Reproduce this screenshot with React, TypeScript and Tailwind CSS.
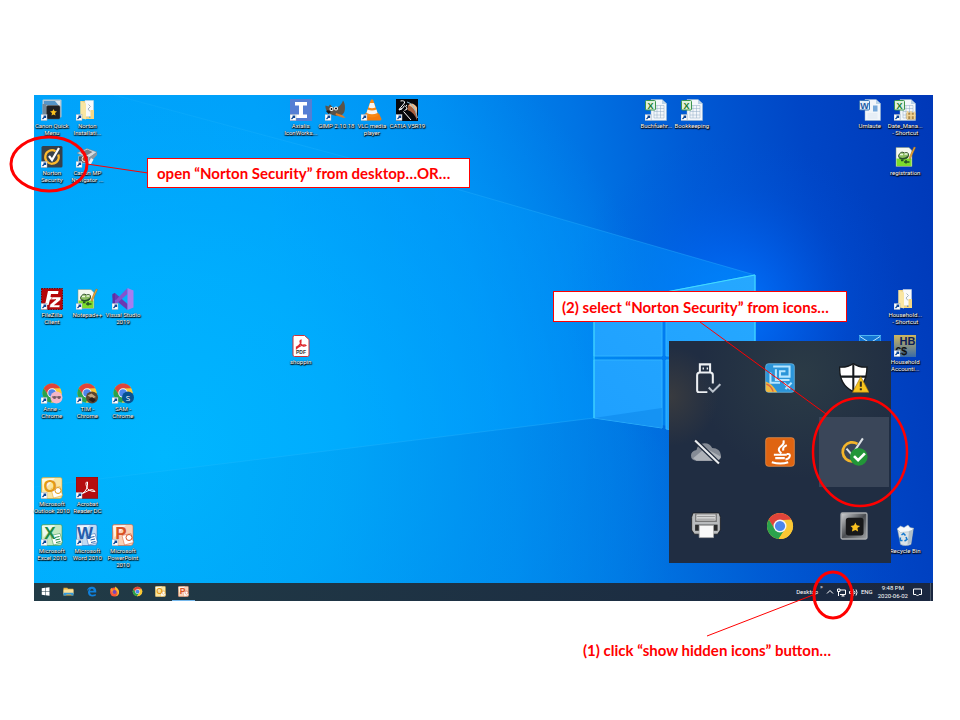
import type { ReactNode } from 'react';
import clsx from 'clsx';

interface DesktopItem {
  label: string[];
  name?: string;
  cell: string;
  icon: ReactNode;
  shortcut?: boolean;
}

/** Small white square with the blue arrow, lower left of a shortcut. */
function ShortcutArrow() {
  return (
    <g>
      <rect x="0" y="31" width="12" height="12" fill="#fff" stroke="#9ab" strokeWidth="1" />
      <path d="m3 40 5-5M5 34h4v4" fill="none" stroke="#0a4596" strokeWidth="2.500" />
    </g>
  );
}

function ChromeMark() {
  return (
    <g>
      <circle cx="22" cy="22" r="19" fill="#fbc834" />
      <path d="M5.5 12.5A19 19 0 0 1 38.500 12.500L22 13.500 14 26.500z" fill="#e0443a" />
      <path d="M5.500 12.500A19 19 0 0 0 20 41L29.500 26.500 14 26z" fill="#2ba24c" />
      <path d="M22 13.500h17A19 19 0 0 1 20 41l9.500-14.500z" fill="#fbc834" />
      <circle cx="22" cy="22" r="9.500" fill="#f4f6f8" />
      <circle cx="22" cy="22" r="7.500" fill="#4d86ec" />
    </g>
  );
}

function StarBox() {
  return (
    <g>
      <rect x="3" y="3" width="38" height="38" rx="2" fill="url(#metal)" stroke="#a9acaf" strokeWidth="2" />
      <rect x="10" y="10" width="26" height="26" rx="4" fill="#17181a" />
      <path d="m24 17 2 4 5 1-4 3 1 5-4-2-5 2 1-5-3-3 5-1z" fill="#f9c120" />
    </g>
  );
}

function QuickMenuIcon() {
  return (
    <g>
      <rect x="3" y="1" width="38" height="36" rx="2" fill="#b7c9d6" />
      <path d="M6 4h32v8H6z" fill="#5595c8" />
      <path d="M28 4h10v12z" fill="#dfe9ef" />
      <rect x="3" y="10" width="8" height="27" fill="#73899a" />
      <rect x="11" y="13" width="27" height="27" rx="3" fill="#202123" stroke="#51565b" />
      <path d="m25 20 2 4 5 1-4 3 1 5-4-2-4 2 1-5-4-3 5-1z" fill="#f9c120" />
    </g>
  );
}

function FolderIcon() {
  return (
    <g>
      <path d="M9 4h17v35H9z" fill="#eed17b" />
      <path d="M18 3h17v32H18z" fill="#f9fafb" stroke="#d0d7dc" />
      <path d="m25 11 4 4-5 5 4 5" fill="none" stroke="#a6b4c0" strokeWidth="2" />
      <path d="M9 4l11 5v32L9 38z" fill="#fae6a2" />
      <path d="M29 22h7v18H20v-3h9z" fill="#f4d783" />
    </g>
  );
}

function NortonIcon() {
  return (
    <g>
      <rect x="1" y="0" width="42" height="43" rx="3" fill="#37404a" />
      <path d="M29 10.500A13.500 13.500 0 1 0 34.500 17" fill="none" stroke="#fbb92c" strokeWidth="4.500" />
      <path d="m16 20 6 8L36 4" fill="none" stroke="#fff" strokeWidth="4.500" />
    </g>
  );
}

function NavigatorIcon() {
  return (
    <g>
      <path d="m2 14 20-9 20 7-17 13z" fill="#d6dade" stroke="#707880" />
      <path d="m8 13 15-6 10 5-14 8z" fill="#777f87" />
      <path d="m24 24 18-11v5L28 33z" fill="#8d969f" />
      <rect x="5" y="20" width="20" height="14" rx="2" fill="#4f5860" stroke="#e3e7ea" />
      <circle cx="17" cy="26" r="5" fill="#a7532e" stroke="#f1f1f1" strokeWidth="2" />
      <path d="m24 35 6-11 5 3-6 11z" fill="#eee" />
    </g>
  );
}

function IconWorksIcon() {
  return (
    <g>
      <rect x="0" y="0" width="44" height="44" fill="#557ed4" />
      <path d="M10 6h24v7h-8v18h8v7H10v-7h8V13h-8z" fill="#fff" />
    </g>
  );
}

function GimpIcon() {
  return (
    <g>
      <path d="M1 13 7 15 10 11 16 17c8 1 16-2 20-14 5 6 6 23-1 28-7 4-18 3-24-1C4 26 0 20 1 13z" fill="#5b5348" />
      <circle cx="13" cy="20" r="4" fill="#fff" />
      <circle cx="22" cy="19" r="4" fill="#fff" />
      <circle cx="13" cy="20" r="2" />
      <circle cx="22" cy="19" r="2" />
      <path d="m22 28 14 5 5 5-7-1-13-5z" fill="#dd7b27" />
      <path d="M2 24q5-4 10 2l-5 4z" fill="#201d1b" />
    </g>
  );
}

function VlcIcon() {
  return (
    <g>
      <path d="M8 29h28l5 11q0 3-3 3H7q-4 0-3-3z" fill="#f47b0b" />
      <path d="M20 1h4l11 32q-13 8-26 0z" fill="#f88712" />
      <path d="m18 8 8 0 3 9q-7 3-14 0zM13 21q9 4 18 0l2 7q-11 5-22 0z" fill="#f5f4f2" />
    </g>
  );
}

function CatiaIcon() {
  return (
    <g>
      <rect x="0" y="0" width="44" height="44" fill="#06070b" />
      <path d="M24 12q9-4 18 4v27q-5-16-19-21z" fill="#a8603c" />
      <path d="M28 9q10-1 14 9v12Q36 17 26 13z" fill="#f0bb8a" />
      <path d="M22 6Q36 8 43 38" fill="none" stroke="#86bbd6" strokeWidth="2" />
      <path d="M9 4q9-2 8 4L6 21q9-1 11-8M22 12q-5 2-1 5t-4 6M12 20l-6 2M15 25l15 17" fill="none" stroke="#fff" strokeWidth="2" />
    </g>
  );
}

function SheetIcon({ doc = false, tools = false }: { doc?: boolean; tools?: boolean }) {
  return (
    <g>
      <path d="M12 1h22l9 8v34H12z" fill="#f2f6fa" stroke="#9bb7cf" />
      <path d="M34 1v9h9z" fill="#b9d2e6" />
      {doc ? (
        <g>
          <path d="M28 13h9v12h-9z" fill="#75a8da" />
          <path d="M17 30h20M17 34h20M17 38h20" stroke="#dbe6f1" strokeWidth="2" />
        </g>
      ) : (
        <path d="M18 13h20v25H18zM18 19h20M18 25h20M18 32h20M24 13v25M31 13v25" fill="none" stroke="#91adc7" />
      )}
      <rect x="1" y="3" width="20" height="19" rx="2" fill={doc ? '#e5effa' : '#dff0dc'} stroke={doc ? '#3b74b6' : '#3c964d'} strokeWidth="2" />
      <text x="11" y="19" textAnchor="middle" fontSize="18" fontWeight="700" fill={doc ? '#1d5ba6' : '#1b7a2b'} fontFamily="Liberation Sans, sans-serif">
        {doc ? 'W' : 'X'}
      </text>
      {tools && (
        <g>
          <rect x="25" y="27" width="18" height="14" rx="2" fill="#ad8848" />
          <path d="M27 24v16M34 24v16M41 25v15M25 33h18" stroke="#f0d396" strokeWidth="3" />
        </g>
      )}
    </g>
  );
}

function NotepadIcon() {
  return (
    <g>
      <path d="M4 3h26l6 6v32H4z" fill="#f5f8ef" stroke="#839070" />
      <path d="M5 25h30v15H5z" fill="#7ddc2c" />
      <path d="M9 19q5-10 12-5 8-3 8 4 0 8-11 8-8 1-9-7z" fill="#8cbd62" stroke="#33502c" strokeWidth="2" />
      <path d="M12 17h6M21 16h6" stroke="#e9f6de" strokeWidth="3" />
      <path d="M11 24q9 4 17-3M20 32h11M24 28v7M14 29h5" stroke="#24502a" strokeWidth="3" fill="none" />
      <path d="m30 24 10-22 3 1-11 24z" fill="#efa936" stroke="#a66b19" />
    </g>
  );
}

function FileZillaIcon() {
  return (
    <g>
      <rect x="1" y="1" width="42" height="42" fill="#b50609" stroke="#7e0204" strokeWidth="2" strokeDasharray="3 2" />
      <path d="M8 34 14 6h21l-1 6H20l-1 6h9l-1 5h-9l-3 11z" fill="#fff" />
      <path d="M22 18h18l-1 6-12 10h11l-1 5H17l1-6 12-10h-9z" fill="#fff" stroke="#b50609" />
    </g>
  );
}

function VisualStudioIcon() {
  return (
    <g>
      <path d="m1 13 5-3 25 22v12L1 19z" fill="#6a38b2" />
      <path d="M1 31 31 0v12L6 34z" fill="#8452cf" />
      <path d="m1 12 5-2v24l-5-3z" fill="#5f30a3" />
      <path d="m31 0 12 5v34l-12 5z" fill="#a67df0" />
    </g>
  );
}

function PdfIcon() {
  return (
    <g>
      <path d="M9 1h20l9 8v31q0 3-3 3H9q-3 0-3-3V4q0-3 3-3z" fill="#fff" stroke="#cf3339" strokeWidth="2" />
      <path d="M13 24q10-4 9-14-4 1 0 8t10 3q-2-3-9 0t-10 6z" fill="none" stroke="#e0282e" strokeWidth="2.500" />
      <text x="22" y="38" textAnchor="middle" fontSize="10" fontWeight="700" fill="#333" fontFamily="Liberation Sans, sans-serif">PDF</text>
    </g>
  );
}

function EnvelopeIcon() {
  return (
    <g>
      <rect x="0" y="1" width="44" height="30" fill="#1476d4" stroke="#4db5f3" strokeWidth="2" />
      <path d="m2 3 20 13L42 3M2 30l15-14M42 30 27 16" fill="none" stroke="#bce7ff" strokeWidth="2" />
    </g>
  );
}

function HouseholdIcon() {
  return (
    <g>
      <rect x="0" y="0" width="44" height="44" fill="url(#household)" />
      <text x="27" y="19" textAnchor="middle" fontSize="22" fontWeight="700" fill="#0b2058" fontFamily="Liberation Sans, sans-serif">HB</text>
      <text x="14" y="40" textAnchor="middle" fontSize="22" fontWeight="700" fill="#111" fontFamily="Liberation Sans, sans-serif">€$</text>
    </g>
  );
}

function ProfileChromeIcon({ profile }: { profile: 'anne' | 'tim' | 'sam' }) {
  return (
    <g>
      <ChromeMark />
      {profile === 'anne' && (
        <g>
          <circle cx="31" cy="31" r="12" fill="#f5b6c8" />
          <path d="M22 30h18" stroke="#555" strokeWidth="2" />
          <circle cx="27" cy="31" r="3" fill="#775763" />
          <circle cx="36" cy="31" r="3" fill="#775763" />
        </g>
      )}
      {profile === 'tim' && (
        <g>
          <circle cx="32" cy="31" r="12" fill="#5c442e" />
          <path d="m23 27 8-4 9 7-7 3z" fill="#c2a37b" />
          <path d="m25 35 7-5 8 6-6 5z" fill="#281d1a" />
        </g>
      )}
      {profile === 'sam' && (
        <g>
          <circle cx="32" cy="31" r="12" fill="#075291" />
          <text x="32" y="37" textAnchor="middle" fontSize="16" fill="#fff" fontFamily="Open Sans, sans-serif">S</text>
        </g>
      )}
    </g>
  );
}

/** Office 2010 tile: glossy sheet, big letter and a small document on it. */
function OfficeIcon({ letter, color, pale }: { letter: string; color: string; pale: string }) {
  return (
    <g>
      <path d="M4 1h34q5 0 4 5v32q0 5-5 5H4q-3 0-3-4V5q0-4 3-4z" fill={pale} stroke={color} strokeWidth="1" />
      <path d="M2 4 28 2 5 27z" fill="#fff" opacity="0.700" />
      <path d="m20 23 18-4 5 18-18 5z" fill="#fff" stroke={color} />
      {letter === 'O' || letter === 'P' ? (
        <circle cx="34" cy="27" r="6" fill="#fff" stroke={color} strokeWidth="2" />
      ) : (
        <path d="m28 27 9-2M29 32l9-2M30 37l9-2" stroke={color} strokeWidth="2" />
      )}
      <text x="18" y="30" textAnchor="middle" fontSize="34" fontWeight="700" fill={color} fontFamily="Liberation Sans, sans-serif">
        {letter}
      </text>
    </g>
  );
}

function AcrobatIcon() {
  return (
    <g>
      <rect x="0" y="0" width="44" height="43" fill="#b50d0f" stroke="#7d0809" />
      <path d="M11 34q14-8 12-24-5-1-2 9t17 10q-4-7-15-1T11 34z" fill="none" stroke="#fff" strokeWidth="2" />
    </g>
  );
}

function RecycleIcon() {
  return (
    <g>
      <path d="m7 11 32-3-5 33q-12 5-21 0z" fill="#dae2e7" stroke="#8799a5" />
      <path d="m6 10 7-6 7 3 8-5 4 5 7 2-5 6-21 2z" fill="#f6f9fb" stroke="#9fb0ba" />
      <path d="m30 14-3 27 7-3 4-27z" fill="#b0bfc9" />
      <path d="m15 22 4-3 4 4M13 27l-1 6h5M24 26l2 5-5 3" fill="none" stroke="#1277ce" strokeWidth="3" />
    </g>
  );
}

const DESKTOP_ITEMS: DesktopItem[] = [
  { label: ['Canon Quick', 'Menu'], cell: 'col-start-1 row-start-1', icon: <QuickMenuIcon />, shortcut: true },
  { label: ['Norton', 'Installati...'], cell: 'col-start-2 row-start-1', icon: <FolderIcon />, shortcut: true },
  { label: ['Axialis', 'IconWorks...'], cell: 'col-start-8 row-start-1', icon: <IconWorksIcon />, shortcut: true },
  { label: ['GIMP 2.10.18'], cell: 'col-start-9 row-start-1', icon: <GimpIcon />, shortcut: true },
  { label: ['VLC media', 'player'], cell: 'col-start-10 row-start-1', icon: <VlcIcon />, shortcut: true },
  { label: ['CATIA V5R19'], cell: 'col-start-11 row-start-1', icon: <CatiaIcon />, shortcut: true },
  { label: ['Buchfuehr...'], cell: 'col-start-18 row-start-1', icon: <SheetIcon />, shortcut: true },
  { label: ['Bookkeeping'], cell: 'col-start-19 row-start-1', icon: <SheetIcon />, shortcut: true },
  { label: ['Umlaute'], cell: 'col-start-24 row-start-1', icon: <SheetIcon doc /> },
  { label: ['Date_Mana...', '- Shortcut'], cell: 'col-start-25 row-start-1', icon: <SheetIcon tools />, shortcut: true },
  { label: ['Norton', 'Security'], cell: 'col-start-1 row-start-2', icon: <NortonIcon />, shortcut: true },
  { label: ['Canon MP', 'Navigator ...'], cell: 'col-start-2 row-start-2', icon: <NavigatorIcon />, shortcut: true },
  { label: ['registration'], cell: 'col-start-25 row-start-2', icon: <NotepadIcon /> },
  { label: ['FileZilla', 'Client'], cell: 'col-start-1 row-start-5', icon: <FileZillaIcon />, shortcut: true },
  { label: ['Notepad++'], cell: 'col-start-2 row-start-5', icon: <NotepadIcon />, shortcut: true },
  { label: ['Visual Studio', '2019'], cell: 'col-start-3 row-start-5', icon: <VisualStudioIcon />, shortcut: true },
  { label: ['Household...', '- Shortcut'], cell: 'col-start-25 row-start-5', icon: <FolderIcon />, shortcut: true },
  { label: ['shoppin'], cell: 'col-start-8 row-start-6', icon: <PdfIcon /> },
  { label: [], name: 'Mail', cell: 'col-start-24 row-start-6', icon: <EnvelopeIcon /> },
  { label: ['Household', 'Accounti...'], cell: 'col-start-25 row-start-6', icon: <HouseholdIcon />, shortcut: true },
  { label: ['Anne -', 'Chrome'], cell: 'col-start-1 row-start-7', icon: <ProfileChromeIcon profile="anne" />, shortcut: true },
  { label: ['TIM -', 'Chrome'], cell: 'col-start-2 row-start-7', icon: <ProfileChromeIcon profile="tim" />, shortcut: true },
  { label: ['SAM -', 'Chrome'], cell: 'col-start-3 row-start-7', icon: <ProfileChromeIcon profile="sam" />, shortcut: true },
  { label: ['Microsoft', 'Outlook 2010'], cell: 'col-start-1 row-start-9', icon: <OfficeIcon letter="O" color="#e39a15" pale="#fbe5a0" />, shortcut: true },
  { label: ['Acrobat', 'Reader DC'], cell: 'col-start-2 row-start-9', icon: <AcrobatIcon />, shortcut: true },
  { label: ['Microsoft', 'Excel 2010'], cell: 'col-start-1 row-start-10', icon: <OfficeIcon letter="X" color="#228b43" pale="#c6e8c1" />, shortcut: true },
  { label: ['Microsoft', 'Word 2010'], cell: 'col-start-2 row-start-10', icon: <OfficeIcon letter="W" color="#245cab" pale="#c1daf3" />, shortcut: true },
  { label: ['Microsoft', 'PowerPoint', '2010'], cell: 'col-start-3 row-start-10', icon: <OfficeIcon letter="P" color="#d85124" pale="#fad0b5" />, shortcut: true },
  { label: ['Recycle Bin'], cell: 'col-start-25 row-start-10', icon: <RecycleIcon /> },
];

const TRAY_ITEMS: { name: string; active?: boolean; icon: ReactNode }[] = [
  {
    name: 'Safely Remove Hardware',
    icon: (
      <g fill="none" stroke="#edf0f3" strokeWidth="3">
        <path d="M13 14V2h15v12M24 43H12q-3 0-3-3V18q0-4 4-4h15q4 0 4 4v12" />
        <path d="m26 36 6 6 11-11" stroke="#b9c2cc" />
        <path d="M17 8h2M23 8h2" />
      </g>
    ),
  },
  {
    name: 'Graphics Settings',
    icon: (
      <g>
        <rect x="1" y="1" width="42" height="42" rx="4" fill="#2b95d9" stroke="#79bfe8" />
        <path d="M1 27q10 3 17 16H5q-4 0-4-4z" fill="#efb942" />
        <path d="M2 31q7 2 10 11" fill="none" stroke="#da6547" strokeWidth="2" />
        <path d="M12 5h24v15H22v-8h8M16 9v16h20M8 14v15h14M28 29l9 9M39 29l-9 9" fill="none" stroke="#b7e6ff" strokeWidth="3" />
      </g>
    ),
  },
  {
    name: 'Windows Security',
    icon: (
      <g>
        <path d="M21 1q9 6 20 5 0 27-20 36Q0 32 1 6q11 1 20-5z" fill="#fff" stroke="#15191d" strokeWidth="2" />
        <path d="M21 2v39M2 20h38" stroke="#15191d" strokeWidth="3" />
        <path d="m32 20 12 23H20z" fill="#f7c51e" stroke="#a97b0c" />
        <path d="M32 27v8M32 37v3" stroke="#322b19" strokeWidth="3" />
      </g>
    ),
  },
  {
    name: 'OneDrive',
    icon: (
      <g>
        <path d="M8 35q-8-1-8-8 0-6 8-8 2-10 12-10 8 0 11 7 12 0 13 11 0 8-9 8z" fill="#858b95" />
        <path d="m3 31 18-15 23 13q-2 6-9 6H8z" fill="#aeb2b8" />
        <path d="m6 5 35 34" stroke="#202b3d" strokeWidth="7" />
        <path d="m6 5 35 34" stroke="#eceef0" strokeWidth="3" />
      </g>
    ),
  },
  {
    name: 'Java Update',
    icon: (
      <g>
        <rect x="1" y="1" width="42" height="42" rx="4" fill="#df6411" stroke="#f19b52" />
        <path d="M27 5q2 5-4 9-6 5 1 10M32 12q-7 3-5 8M13 26h19M15 31h14M10 37q13 4 24 0M32 25q6-1 4 4-1 3-6 4" fill="none" stroke="#fff" strokeWidth="3" />
      </g>
    ),
  },
  {
    name: 'Norton Security',
    active: true,
    icon: (
      <g>
        <path d="M27 10A14 14 0 1 0 29 32" fill="none" stroke="#f4b52b" strokeWidth="4" />
        <path d="m11 17 8 9L35 2" fill="none" stroke="#dce1e6" strokeWidth="3" />
        <circle cx="29" cy="29" r="13" fill="#229638" />
        <path d="m22 28 6 6 10-10" fill="none" stroke="#fff" strokeWidth="4" />
      </g>
    ),
  },
  {
    name: 'Printer',
    icon: (
      <g>
        <path d="M3 3h38l2 6v19l-4 6H5l-4-6V9z" fill="#b9bbbd" stroke="#111" />
        <path d="M7 4h30v11H7z" fill="#e8e8e8" stroke="#777" strokeWidth="2" />
        <path d="M9 8h26M9 12h26" stroke="#999" strokeWidth="2" />
        <path d="M6 20h33v9H6z" fill="#292a2b" />
        <path d="M12 21h21v18H12z" fill="#f8f8f8" stroke="#aaa" />
      </g>
    ),
  },
  { name: 'Google Chrome', icon: <ChromeMark /> },
  { name: 'Canon Quick Menu', icon: <StarBox /> },
];

const TASKBAR_ITEMS: { name: string; open?: boolean; icon: ReactNode }[] = [
  {
    name: 'Start',
    icon: <path d="M7 9l13-2v14H7zM22 7l16-2v16H22zM7 23h13v14L7 35zM22 23h16v16l-16-2z" fill="#fff" />,
  },
  {
    name: 'File Explorer',
    icon: (
      <g>
        <path d="M2 7h15l3 4h21v27H2z" fill="#eab340" />
        <path d="M2 14h40v18H2z" fill="#fbe09a" />
        <path d="M2 27h40v11h-9v-4H13v4H2z" fill="#3599d9" />
      </g>
    ),
  },
  {
    name: 'Microsoft Edge',
    icon: (
      <path
        d="M4 22C5 8 14 3 24 3c14 0 18 11 17 23H16c1 11 14 11 23 6v7c-15 7-31 2-31-13 0-6 3-10 7-13-7 1-10 5-11 9zm12-3h15q-1-8-8-8-6 1-7 8z"
        fill="#0f80dc"
        fillRule="evenodd"
      />
    ),
  },
  {
    name: 'Firefox',
    icon: (
      <g>
        <circle cx="22" cy="24" r="18" fill="#fb5439" />
        <path d="M24 2q16 10 16 23 0 13-14 17 12-9 7-19-2-5-8-8z" fill="#fcc32a" />
        <path d="M5 15 9 7l6 7q13-2 15 8 1 12-10 11-7-1-9-8z" fill="#ff9130" />
        <circle cx="22" cy="24" r="8" fill="#7745ba" />
      </g>
    ),
  },
  { name: 'Google Chrome', icon: <ChromeMark /> },
  { name: 'Outlook', icon: <OfficeIcon letter="O" color="#e39a15" pale="#fbe5a0" /> },
  { name: 'PowerPoint', open: true, icon: <OfficeIcon letter="P" color="#d85124" pale="#fad0b5" /> },
];

function Wallpaper() {
  return (
    <svg
      aria-hidden="true"
      viewBox="0 0 899 506"
      preserveAspectRatio="none"
      className="absolute inset-0 h-full w-full"
    >
      <defs>
        <linearGradient id="sky" x1="0" y1="0.100" x2="1" y2="0">
          <stop offset="0" stopColor="#00a2f8" />
          <stop offset="0.250" stopColor="#009ef7" />
          <stop offset="0.450" stopColor="#008cf0" />
          <stop offset="0.600" stopColor="#0074e4" />
          <stop offset="0.720" stopColor="#005bd5" />
          <stop offset="0.850" stopColor="#0046c6" />
          <stop offset="1" stopColor="#0038b8" />
        </linearGradient>
        <radialGradient id="haze" cx="130" cy="360" r="520" gradientUnits="userSpaceOnUse">
          <stop offset="0" stopColor="#00b8ff" />
          <stop offset="0.350" stopColor="#00b2ff" stopOpacity="0.800" />
          <stop offset="0.700" stopColor="#00a6ff" stopOpacity="0.400" />
          <stop offset="1" stopColor="#00a0ff" stopOpacity="0" />
        </radialGradient>
        <radialGradient id="glow" cx="700" cy="210" r="170" gradientUnits="userSpaceOnUse">
          <stop offset="0" stopColor="#0078ff" stopOpacity="0.900" />
          <stop offset="0.350" stopColor="#0068fa" stopOpacity="0.500" />
          <stop offset="0.700" stopColor="#0058e8" stopOpacity="0.150" />
          <stop offset="1" stopColor="#0050e0" stopOpacity="0" />
        </radialGradient>
        <linearGradient id="beam" x1="0" y1="0" x2="1" y2="0">
          <stop offset="0" stopColor="#00b0ff" stopOpacity="0" />
          <stop offset="1" stopColor="#0094ff" stopOpacity="0.500" />
        </linearGradient>
        <linearGradient id="edge" x1="0" y1="0" x2="1" y2="0">
          <stop offset="0" stopColor="#3cc4ff" stopOpacity="0.100" />
          <stop offset="1" stopColor="#2ab4ff" stopOpacity="0.400" />
        </linearGradient>
        <linearGradient id="floor" x1="0" y1="0" x2="1" y2="0">
          <stop offset="0" stopColor="#0080e0" stopOpacity="0" />
          <stop offset="0.650" stopColor="#0074dc" stopOpacity="0.350" />
          <stop offset="1" stopColor="#0040c0" stopOpacity="0.100" />
        </linearGradient>
        <linearGradient id="pane" x1="0" y1="1" x2="1" y2="0">
          <stop offset="0" stopColor="#1ea0ff" />
          <stop offset="1" stopColor="#26a8ff" />
        </linearGradient>
        <linearGradient id="household" x1="0" y1="0" x2="0" y2="1">
          <stop offset="0" stopColor="#cfb65e" />
          <stop offset="1" stopColor="#3a6ba6" />
        </linearGradient>
        <linearGradient id="metal" x1="0" y1="0" x2="1" y2="1">
          <stop offset="0" stopColor="#d2d4d6" />
          <stop offset="0.500" stopColor="#4b4e52" />
          <stop offset="1" stopColor="#9fa2a5" />
        </linearGradient>
      </defs>
      <rect width="899" height="506" fill="url(#sky)" />
      <rect width="899" height="506" fill="url(#haze)" />
      <rect width="899" height="506" fill="url(#glow)" />
      <path d="M80 0 315 63 721 180 721 340 560 323 0 392V0z" fill="url(#beam)" />
      <path d="M0 392 560 323 721 345 850 372 899 506H0z" fill="url(#floor)" />
      <path d="M80 0 315 63 721 180" fill="none" stroke="url(#edge)" />
      <path d="M0 392 560 323" fill="none" stroke="url(#edge)" />
      <path
        d="M560 211 628 198v63h-68zM632 197l89-17v81h-89zM560 265h68v68l-68-10zM632 265h89v82l-89-13z"
        fill="url(#pane)"
        stroke="#30b4ff"
      />
      <path d="m560 323 68-10v20z" fill="#0a84e8" opacity="0.500" />
      <path d="M560 211v112M632 197l89-17v81" fill="none" stroke="#42dcff" />
    </svg>
  );
}

function DesktopIcon({ item }: { item: DesktopItem }) {
  return (
    <button
      type="button"
      aria-label={item.name ?? item.label.join(' ')}
      className={clsx('flex flex-col items-center gap-px', item.cell)}
    >
      <svg viewBox="0 0 44 44" className="size-[22px] shrink-0">
        {item.icon}
        {item.shortcut && <ShortcutArrow />}
      </svg>
      <span className="flex flex-col items-center text-[6px] leading-[7px] whitespace-nowrap text-white [text-shadow:0_0_1px_#000,0_1px_1px_#000,1px_1px_1px_#000]">
        {item.label.map((line) => (
          <span key={line}>{line}</span>
        ))}
      </span>
    </button>
  );
}

function HiddenIconsPanel() {
  return (
    <div className="absolute right-[42px] bottom-[38px] grid size-[222px] grid-cols-3 grid-rows-3 bg-[#202d42] bg-[radial-gradient(circle_at_60%_15%,#2b3b46_0%,transparent_45%),radial-gradient(circle_at_0%_25%,#393b3f_0%,transparent_18%)]">
      {TRAY_ITEMS.map((item) => (
        <button
          key={item.name}
          type="button"
          aria-label={item.name}
          className={clsx('m-[2px] flex items-center justify-center', item.active && 'bg-[#3a4659]')}
        >
          <svg viewBox="0 0 44 44" className="size-[30px]">
            {item.icon}
          </svg>
        </button>
      ))}
    </div>
  );
}

function Taskbar() {
  return (
    <footer className="relative flex h-[18px] shrink-0 items-center justify-between bg-linear-to-r from-[#213b46] to-[#1a2740] text-[6px] leading-[8px] text-white">
      <div className="flex h-full">
        {TASKBAR_ITEMS.map((item) => (
          <button
            key={item.name}
            type="button"
            aria-label={item.name}
            className={clsx(
              'flex w-[23px] items-center justify-center border-b',
              item.open ? 'border-[#76b9ed]' : 'border-transparent'
            )}
          >
            <svg viewBox="0 0 44 44" className="size-[11px]">
              {item.icon}
            </svg>
          </button>
        ))}
      </div>
      <div className="mr-[2px] flex h-full items-center gap-[3px] border-r border-[#4c5968] pr-[8px]">
        <span className="flex h-full gap-[2px]">
          <span className="self-center">Desktop</span>
          <span>»</span>
        </span>
        <button type="button" aria-label="Show hidden icons">
          <svg viewBox="0 0 16 16" className="size-[8px]" fill="none" stroke="#fff" strokeWidth="2">
            <path d="m2 11 6-6 6 6" />
          </svg>
        </button>
        <svg viewBox="0 0 18 18" className="size-[9px]" fill="none" stroke="#fff" strokeWidth="2">
          <path d="M6 4h11v9H6M9 16h6M12 13v3M1 2h5v5H1zM3 7v9" />
        </svg>
        <svg viewBox="0 0 18 18" className="size-[9px]" fill="none" stroke="#fff" strokeWidth="2">
          <path d="M1 7h3l4-4v12l-4-4H1zM11 6q2 3 0 6M14 3q4 6 0 12" />
        </svg>
        <span>ENG</span>
        <span className="mx-[2px] flex flex-col items-center">
          <time>9:48 PM</time>
          <time>2020-06-02</time>
        </span>
        <button type="button" aria-label="Notifications">
          <svg viewBox="0 0 18 18" className="size-[9px]" fill="none" stroke="#fff" strokeWidth="2">
            <path d="M1 2h16v11h-5l-3 3-3-3H1z" />
          </svg>
        </button>
      </div>
    </footer>
  );
}

function Callouts() {
  return (
    <>
      <svg
        aria-hidden="true"
        viewBox="0 0 960 720"
        preserveAspectRatio="xMinYMin meet"
        className="pointer-events-none absolute top-0 left-0 w-full"
        fill="none"
        stroke="#f00"
      >
        <g strokeWidth="3">
          <ellipse cx="49" cy="164" rx="38" ry="27" />
          <ellipse cx="860" cy="452" rx="47" ry="54" strokeWidth="2.500" />
          <ellipse cx="833" cy="595" rx="19" ry="23" />
        </g>
        <path d="m87 164 61 9M700 322l126 92M813 595l-106 41" />
      </svg>
      <p className="absolute top-[158px] left-[147px] flex h-[30px] w-[323px] items-center border border-[#f00] bg-white pl-[9px]">
        open “Norton Security” from desktop…OR…
      </p>
      <p className="absolute top-[291px] right-[113px] flex h-[31px] w-[294px] items-center border border-[#f00] bg-white pl-[8px]">
        (2) select “Norton Security” from icons…
      </p>
    </>
  );
}

export default function App() {
  return (
    <main className="relative min-h-screen bg-white pt-[95px] pr-[27px] pb-[60px] pl-[34px] font-['Lato',sans-serif] text-[15px] leading-[20px] font-bold whitespace-nowrap text-[#f00]">
      <section className="relative flex aspect-[899/506] flex-col font-['Roboto','Noto_Sans',sans-serif] font-normal">
        <Wallpaper />
        <div className="relative grid flex-1 grid-cols-25 grid-rows-10 pt-[4px] pr-[10px] pb-[12px]">
          {DESKTOP_ITEMS.map((item) => (
            <DesktopIcon key={item.cell} item={item} />
          ))}
        </div>
        <Taskbar />
        <HiddenIconsPanel />
      </section>
      <p className="mt-[39px] pr-[102px] text-right">(1) click “show hidden icons” button…</p>
      <Callouts />
    </main>
  );
}
